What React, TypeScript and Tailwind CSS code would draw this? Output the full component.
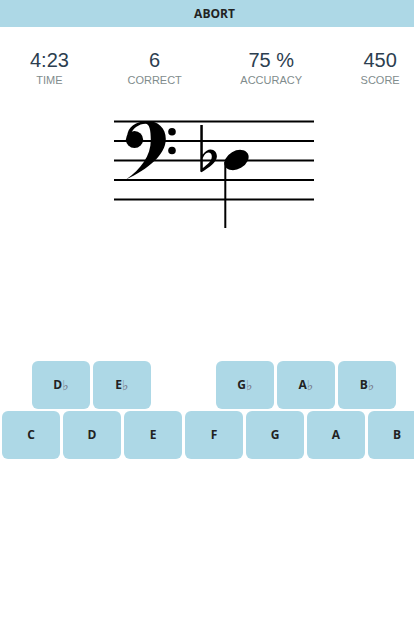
const stats = [
  { value: '4:23', label: 'TIME' },
  { value: '6', label: 'CORRECT' },
  { value: '75 %', label: 'ACCURACY' },
  { value: '450', label: 'SCORE' },
];

const flats = ['D', 'E', null, 'G', 'A', 'B'];
const naturals = ['C', 'D', 'E', 'F', 'G', 'A', 'B'];

function Staff() {
  return (
    <svg viewBox="114 115 200 120" className="ml-[114px] h-[120px] w-[200px]">
      {[121.5, 141, 160.5, 180, 199.5].map((y) => (
        <line key={y} x1="114" x2="314" y1={y} y2={y} stroke="#000" strokeWidth="1.8" />
      ))}
      {/* bass clef */}
      <circle cx="134.500" cy="139.500" r="8.600" />
      <path d="M126 179.500C148 169 165.800 155 165.800 139C165.800 128 158 121 147.500 121C136 121 127.300 127.500 127.300 136L130 136C132 128.500 139 123.700 145.500 123.700C149.500 123.700 150.800 130 150.800 140C150.800 156 141 169 126 179.500Z" />
      <circle cx="172" cy="131.700" r="3.800" />
      <circle cx="172" cy="150.500" r="3.800" />
      {/* flat */}
      <path
        fillRule="evenodd"
        d="M200.300 125H202.800V154.500C205.500 151 208 149.500 210.500 149.500C214.500 149.500 216.900 152.500 216.900 156.500C216.900 162 209 167.500 201.500 172.300L200.300 171.500ZM202.800 158V168C207.500 164.500 211.800 161 211.800 156.500C211.800 153.800 210.300 152.500 208.300 152.500C206 152.500 204.300 154.800 202.800 158Z"
      />
      {/* note */}
      <ellipse cx="236.500" cy="160" rx="13" ry="9" transform="rotate(-30 236.500 160)" />
      <line x1="225.300" x2="225.300" y1="162" y2="228" stroke="#000" strokeWidth="2" />
    </svg>
  );
}

function Key({ note, flat }: { note: string; flat?: boolean }) {
  return (
    <button className="flex h-12 w-[58px] shrink-0 items-center justify-center rounded-md bg-[#add8e6] font-['Open_Sans',sans-serif] text-xs font-bold text-[#222]">
      {note}
      {flat && <span className="font-['DejaVu_Sans',sans-serif] text-sm leading-none font-normal text-[#778]">♭</span>}
    </button>
  );
}

export default function App() {
  return (
    <div className="h-[618px] w-[414px] overflow-hidden bg-white">
      <div className="flex h-[27px] items-center justify-center bg-[#add8e6] pl-[15px] font-['Open_Sans',sans-serif] text-xs font-bold text-[#222]">
        ABORT
      </div>

      <div className="mt-[21px] flex gap-[58.5px] pl-[30px] font-['Liberation_Sans',sans-serif]">
        {stats.map((s) => (
          <div key={s.label} className="flex flex-col items-center">
            <div className="text-xl leading-6 text-[#2c3e50]">{s.value}</div>
            <div className="mt-px text-[11px] leading-[14px] text-[#7f8c8d]">{s.label}</div>
          </div>
        ))}
      </div>

      <div className="mt-7">
        <Staff />
      </div>

      <div className="mt-[126px] flex gap-[3px] pl-8">
        {flats.map((n, i) =>
          n ? <Key key={n} note={n} flat /> : <div key={i} className="w-[59px] shrink-0" />
        )}
      </div>
      <div className="mt-0.5 flex gap-[3px] pl-0.5">
        {naturals.map((n) => (
          <Key key={n} note={n} />
        ))}
      </div>
    </div>
  );
}
